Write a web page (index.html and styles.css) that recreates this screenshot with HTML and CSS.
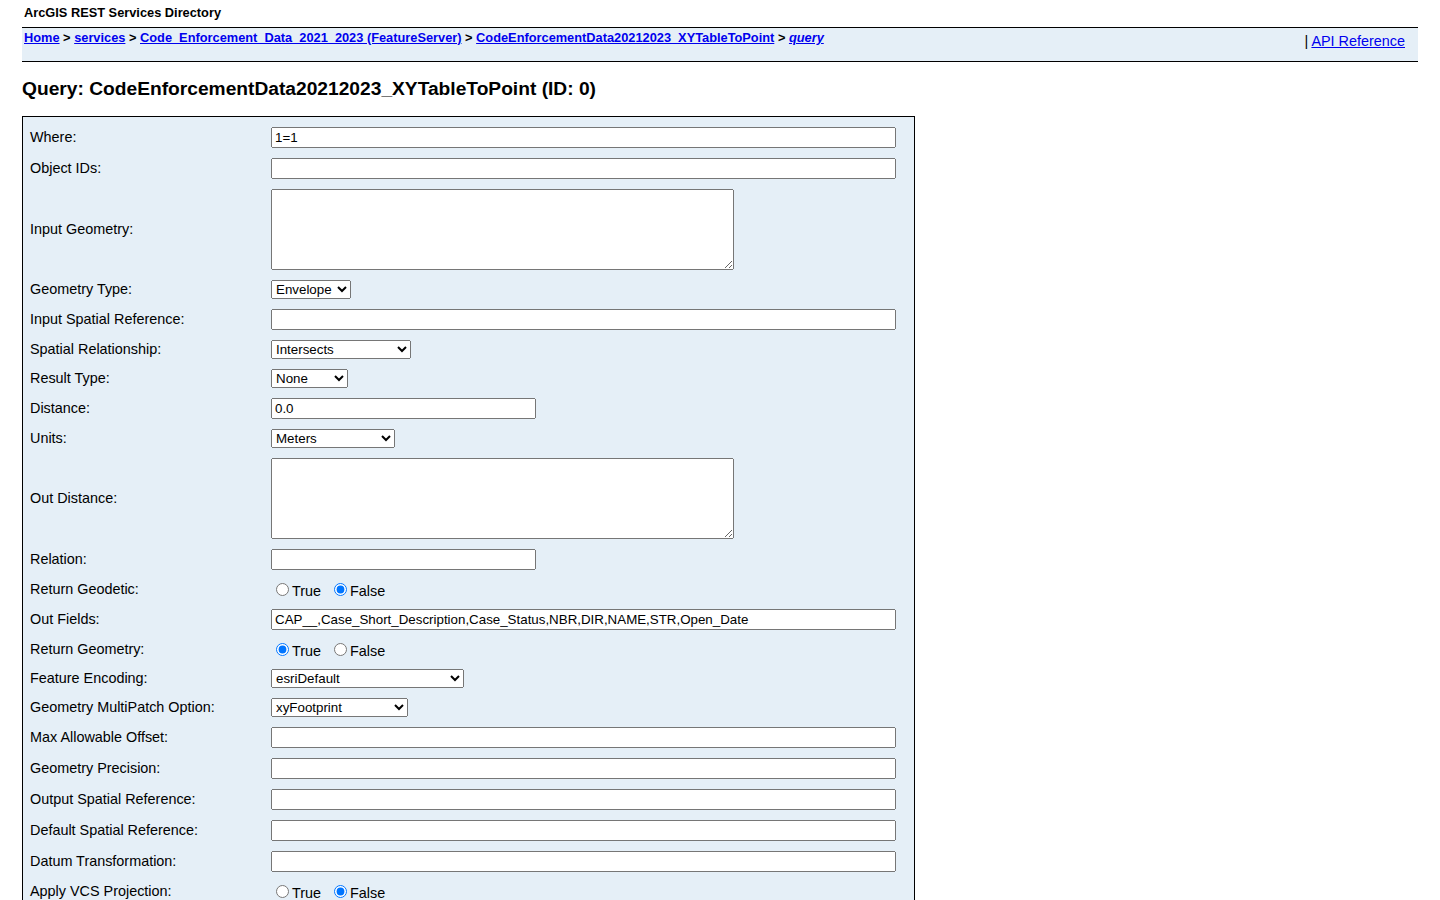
FILE: index.html
```html
<!DOCTYPE html>
<html>
<head>
  <meta charset="UTF-8">
  <title>Query: CodeEnforcementData20212023_XYTableToPoint (ID: 0)</title>
  <link rel="stylesheet" href="styles.css">
</head>
<body>
  <div class="titlecell">ArcGIS REST Services Directory</div>

  <div class="navbar">
    <div class="breadcrumbs">
      <a href="#">Home</a> &gt;
      <a href="#">services</a> &gt;
      <a href="#">Code_Enforcement_Data_2021_2023 (FeatureServer)</a> &gt;
      <a href="#">CodeEnforcementData20212023_XYTableToPoint</a> &gt;
      <a href="#"><i>query</i></a>
    </div>
    <div class="apiref">| <a href="#">API Reference</a></div>
  </div>

  <h2>Query: CodeEnforcementData20212023_XYTableToPoint (ID: 0)</h2>

  <form>
    <table class="formTable">
      <tr>
        <td class="lbl">Where:</td>
        <td><input type="text" class="wide" value="1=1"></td>
      </tr>
      <tr>
        <td class="lbl">Object IDs:</td>
        <td><input type="text" class="wide"></td>
      </tr>
      <tr>
        <td class="lbl">Input Geometry:</td>
        <td><textarea></textarea></td>
      </tr>
      <tr>
        <td class="lbl">Geometry Type:</td>
        <td>
          <select class="sel-geom">
            <option>Envelope</option>
            <option>Point</option>
            <option>Polyline</option>
            <option>Polygon</option>
            <option>Multipoint</option>
          </select>
        </td>
      </tr>
      <tr>
        <td class="lbl">Input Spatial Reference:</td>
        <td><input type="text" class="wide"></td>
      </tr>
      <tr>
        <td class="lbl">Spatial Relationship:</td>
        <td>
          <select class="sel-rel">
            <option>Intersects</option>
            <option>Contains</option>
            <option>Crosses</option>
            <option>Envelope Intersects</option>
            <option>Overlaps</option>
            <option>Touches</option>
            <option>Within</option>
          </select>
        </td>
      </tr>
      <tr>
        <td class="lbl">Result Type:</td>
        <td>
          <select class="sel-result">
            <option>None</option>
            <option>Standard</option>
            <option>Tile</option>
          </select>
        </td>
      </tr>
      <tr>
        <td class="lbl">Distance:</td>
        <td><input type="text" class="short" value="0.0"></td>
      </tr>
      <tr>
        <td class="lbl">Units:</td>
        <td>
          <select class="sel-units">
            <option>Meters</option>
            <option>Feet</option>
            <option>Statute Miles</option>
          </select>
        </td>
      </tr>
      <tr>
        <td class="lbl">Out Distance:</td>
        <td><textarea></textarea></td>
      </tr>
      <tr>
        <td class="lbl">Relation:</td>
        <td><input type="text" class="short"></td>
      </tr>
      <tr>
        <td class="lbl">Return Geodetic:</td>
        <td class="radios">
          <label><input type="radio" name="geodetic">True</label>&nbsp;
          <label><input type="radio" name="geodetic" checked>False</label>
        </td>
      </tr>
      <tr>
        <td class="lbl">Out Fields:</td>
        <td><input type="text" class="wide" value="CAP__,Case_Short_Description,Case_Status,NBR,DIR,NAME,STR,Open_Date"></td>
      </tr>
      <tr>
        <td class="lbl">Return Geometry:</td>
        <td class="radios">
          <label><input type="radio" name="retgeom" checked>True</label>&nbsp;
          <label><input type="radio" name="retgeom">False</label>
        </td>
      </tr>
      <tr>
        <td class="lbl">Feature Encoding:</td>
        <td>
          <select class="sel-enc">
            <option>esriDefault</option>
            <option>esriCompressedShapeBuffer</option>
          </select>
        </td>
      </tr>
      <tr>
        <td class="lbl">Geometry MultiPatch Option:</td>
        <td>
          <select class="sel-mp">
            <option>xyFootprint</option>
            <option>stripMaterials</option>
            <option>embedMaterials</option>
          </select>
        </td>
      </tr>
      <tr>
        <td class="lbl">Max Allowable Offset:</td>
        <td><input type="text" class="wide"></td>
      </tr>
      <tr>
        <td class="lbl">Geometry Precision:</td>
        <td><input type="text" class="wide"></td>
      </tr>
      <tr>
        <td class="lbl">Output Spatial Reference:</td>
        <td><input type="text" class="wide"></td>
      </tr>
      <tr>
        <td class="lbl">Default Spatial Reference:</td>
        <td><input type="text" class="wide"></td>
      </tr>
      <tr>
        <td class="lbl">Datum Transformation:</td>
        <td><input type="text" class="wide"></td>
      </tr>
      <tr>
        <td class="lbl">Apply VCS Projection:</td>
        <td class="radios">
          <label><input type="radio" name="vcs">True</label>&nbsp;
          <label><input type="radio" name="vcs" checked>False</label>
        </td>
      </tr>
      <tr>
        <td class="lbl">Return IDs Only:</td>
        <td class="radios">
          <label><input type="radio" name="idsonly">True</label>&nbsp;
          <label><input type="radio" name="idsonly" checked>False</label>
        </td>
      </tr>
      <tr>
        <td class="lbl">Return Unique IDs Only:</td>
        <td class="radios">
          <label><input type="radio" name="uniqueids">True</label>&nbsp;
          <label><input type="radio" name="uniqueids" checked>False</label>
        </td>
      </tr>
    </table>
  </form>
</body>
</html>
```

FILE: styles.css
```css
body {
  font-family: 'Liberation Sans', Arial, sans-serif;
  font-size: 14.4px;
  margin: 0;
  padding: 0 22px;
  color: #000;
  background-color: #fff;
}
a {
  color: #0000ee;
}
.titlecell {
  font-size: 12.8px;
  font-weight: bold;
  padding: 5px 2px 7px;
}
.navbar {
  display: flex;
  justify-content: space-between;
  align-items: flex-start;
  height: 33px;
  background-color: #e5eff7;
  border-top: 1px solid #000;
  border-bottom: 1px solid #000;
}
.breadcrumbs {
  font-size: 12.8px;
  font-weight: bold;
  padding: 2px 2px 0;
}
.apiref {
  padding: 5px 13px 0 0;
}
h2 {
  font-size: 19.2px;
  font-weight: bold;
  margin: 16px 0 16px;
}
.formTable {
  border: 1px solid #000;
  background-color: #e5eff7;
  border-spacing: 0;
  padding: 5px 0;
  width: 893px;
}
.formTable td {
  padding: 5px 18px 5px 0;
  vertical-align: middle;
}
.formTable td.lbl {
  width: 241px;
  padding: 4px 0 6px 7px;
}
.formTable input[type="text"],
.formTable select,
.formTable textarea {
  display: block;
  box-sizing: border-box;
  margin: 0;
  font-family: 'Liberation Sans', Arial, sans-serif;
  font-size: 13.33px;
  color: #000;
}
.formTable input[type="text"] {
  height: 21px;
}
.wide {
  width: 625px;
}
.short {
  width: 265px;
}
.formTable textarea {
  width: 463px;
  height: 81px;
}
.formTable select {
  height: 19px;
}
.sel-geom {
  width: 80px;
}
.sel-rel {
  width: 140px;
}
.sel-result {
  width: 77px;
}
.sel-units {
  width: 124px;
}
.sel-enc {
  width: 193px;
}
.sel-mp {
  width: 137px;
}
.radios {
  height: 19px;
}
.radios input {
  margin: 3px 3px 0 5px;
}
```
